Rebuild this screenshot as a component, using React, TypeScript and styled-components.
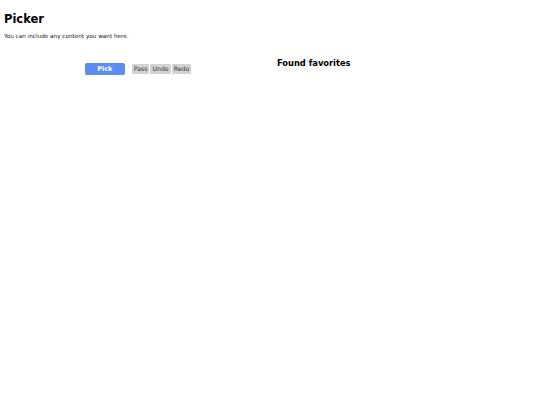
import React from "react";
import styled, { createGlobalStyle } from "styled-components";

const Global = createGlobalStyle`
  html, body { margin: 0; padding: 0; background: #ffffff; }
  body { padding: 4px; font-family: "DejaVu Sans", Verdana, sans-serif; color: #000; }
`;

const Title = styled.h1`
  margin: 8px 0 0 0;
  font-size: 11.5px;
  line-height: 15px;
  font-weight: bold;
`;

const Intro = styled.p`
  margin: 5px 0 0 0;
  font-size: 5.7px;
  line-height: 8px;
  color: #111;
`;

const Columns = styled.div`
  display: grid;
  grid-template-columns: 268px 1fr;
  margin-top: 16px;
`;

const Controls = styled.div`
  display: flex;
  justify-content: center;
  align-items: center;
  gap: 7px;
  padding-top: 7px;
`;

const PickButton = styled.button`
  width: 40px;
  height: 12px;
  border: none;
  border-radius: 2px;
  background: #5b8ef0;
  color: #fff;
  font-family: inherit;
  font-weight: bold;
  font-size: 6.5px;
  padding: 0;
`;

const Group = styled.div`
  display: flex;
  align-items: center;
  gap: 1px;
`;

const SmallButton = styled.button`
  height: 10px;
  padding: 0 2px;
  border: none;
  border-radius: 1px;
  background: #d3d3d3;
  color: #333;
  font-family: inherit;
  font-size: 6.2px;
  line-height: 10px;
`;

const Favorites = styled.div`
  padding-left: 5px;
`;

const FavTitle = styled.h2`
  margin: 1px 0 0 0;
  font-size: 8.3px;
  line-height: 12px;
  font-weight: bold;
`;

export default function App() {
  return (
    <>
      <Global />
      <Title>Picker</Title>
      <Intro>You can include any content you want here.</Intro>
      <Columns>
        <Controls>
          <PickButton>Pick</PickButton>
          <Group>
            <SmallButton>Pass</SmallButton>
            <SmallButton>Undo</SmallButton>
            <SmallButton>Redo</SmallButton>
          </Group>
        </Controls>
        <Favorites>
          <FavTitle>Found favorites</FavTitle>
        </Favorites>
      </Columns>
    </>
  );
}
